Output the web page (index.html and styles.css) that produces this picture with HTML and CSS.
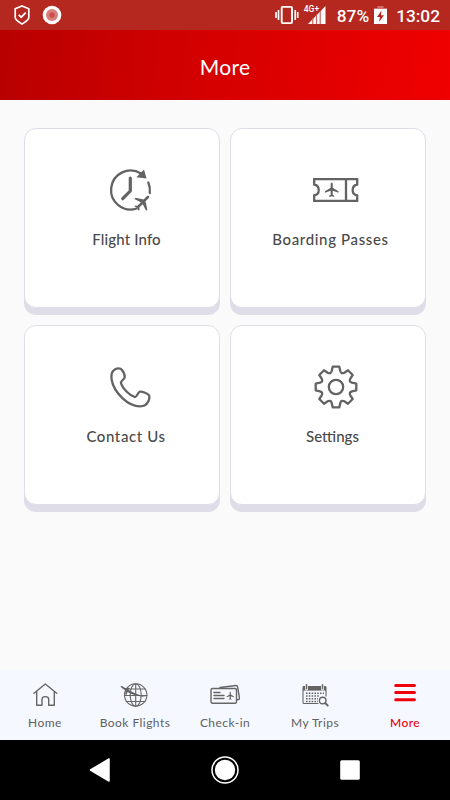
FILE: index.html
```
<!DOCTYPE html>
<html lang="en">
<head>
    <meta charset="UTF-8">
    <meta name="viewport" content="width=device-width, initial-scale=1.0">
    <title>More</title>
    <link rel="stylesheet" href="styles.css">
</head>
<body>
    <svg class="defs" width="0" height="0">
        <symbol id="plane" viewBox="0 0 24 24">
            <path d="M21.5 16v-2l-8-5V3.5c0-.83-.67-1.5-1.5-1.5s-1.5.67-1.5 1.5V9l-8 5v2l8-2.5V19l-2 1.5V22l3.5-1 3.5 1v-1.5L13.5 19v-5.5l8 2.5z"/>
        </symbol>
    </svg>

    <div class="status-bar">
        <div class="status-left">
            <svg width="18" height="22" viewBox="0 0 18 22" fill="none" stroke="#fff" stroke-width="1.7">
                <path d="M9 2l6.8 2.8v8.7c0 2.5-3.5 4.4-6.8 6.5-3.3-2.1-6.8-4-6.8-6.5V4.8z"/>
                <path d="M5.7 10.8l2.5 2.4 4.5-4.5"/>
            </svg>
            <svg width="20" height="20" viewBox="0 0 20 20">
                <circle cx="10" cy="10" r="9.3" fill="#fff"/>
                <circle cx="10" cy="10" r="6" fill="#d97f7b"/>
                <circle cx="10" cy="10" r="2.7" fill="#c9504b"/>
            </svg>
        </div>
        <div class="status-right">
            <svg class="vibrate" width="24" height="20" viewBox="0 0 24 20" fill="none" stroke="#fff">
                <rect x="6.7" y="1.9" width="10.3" height="16.2" rx="1" stroke-width="1.9"/>
                <path d="M3.5 5v10M1 7v6M20.2 5v10M22.7 7v6" stroke-width="1.7"/>
            </svg>
            <div class="signal">
                <span class="network">4G+</span>
                <svg width="18" height="18" viewBox="0 0 18 18">
                    <path d="M0 18L17.5 0v18z" fill="#fff"/>
                    <path d="M4.8 12v6M8.5 8v10M12.2 5v13" stroke="#c8605b" stroke-width="1.2"/>
                </svg>
            </div>
            <span class="percent">87%</span>
            <svg class="battery" width="13" height="18" viewBox="0 0 13 18">
                <path d="M3.5 0h6v2H13v1.5H0V2h3.5z" fill="#d1716c"/>
                <path d="M0 3h13v15H0z" fill="#fff"/>
                <path d="M7.5 4.5L3 11h3l-1 5 5-6.8H7z" fill="#b42820"/>
            </svg>
            <span class="time">13:02</span>
        </div>
    </div>

    <header class="header">
        <h1>More</h1>
    </header>

    <main class="menu">
        <a class="card">
            <svg class="card-icon" viewBox="0 0 48 48">
                <path d="M30.7 42.5A19.5 19.5 0 1 1 35 7.5M42.3 16.5A19.5 19.5 0 0 1 43.8 27"/>
                <path d="M24.3 12v13l-7.600 7.700" stroke-width="3.2"/>
                <path class="solid" d="M38 3.5l2.5 9-10.2-1.2z"/>
                <use class="solid" href="#plane" x="-10.5" y="-10.5" width="21" height="21" transform="translate(36.7 36.3) rotate(45)"/>
            </svg>
            <span class="card-label flight">Flight Info</span>
        </a>
        <a class="card">
            <svg class="card-icon" viewBox="0 0 48 48">
                <path class="square" d="M2.2 13.2h43v5.3a5.6 5.6 0 0 0 0 11v5.3h-43v-5.3a5.6 5.6 0 0 0 0-11z"/>
                <path class="square" d="M34 13.2v21.6"/>
                <use class="solid" href="#plane" x="11.2" y="15.3" width="17" height="17"/>
            </svg>
            <span class="card-label boarding">Boarding Passes</span>
        </a>
        <a class="card">
            <svg class="card-icon" viewBox="0 0 48 48">
                <path d="M7.3 7.7C10 4.9 14.3 4.8 16 7c1.5 1.9 3 5.2 2.7 7.3-.3 2.3-4.5 3.700-3.700 6 2 5.700 8 11.700 13.700 13.700 2 .7 3-4.500 5-5.300 2-.7 7.600 1.800 8.800 3 1.300 1.400.8 4.800-.5 7.300-1.300 2.600-4.500 4.300-8 4.300-6 0-12-3-17.300-8C11 30 6.700 23 5.700 17c-.6-3.700-.4-7.200 1.600-9.300z"/>
            </svg>
            <span class="card-label contact">Contact Us</span>
        </a>
        <a class="card">
            <svg class="card-icon" viewBox="-24 -24 48 48">
                <path d="M-3.3-20.3H3.3L4.3-16Q5.3-12.7 8.3-14.3L12-16.7 16.7-12 14.3-8.3Q12.7-5.3 16-4.3L20.3-3.3V3.3L16 4.3Q12.7 5.3 14.3 8.3L16.7 12 12 16.7 8.3 14.3Q5.3 12.7 4.3 16L3.3 20.3H-3.3L-4.3 16Q-5.3 12.7-8.3 14.3L-12 16.7-16.7 12-14.3 8.3Q-12.7 5.3-16 4.3L-20.3 3.3V-3.3L-16-4.3Q-12.7-5.3-14.3-8.3L-16.7-12-12-16.7-8.3-14.3Q-5.3-12.7-4.3-16z"/>
                <circle r="7.2"/>
            </svg>
            <span class="card-label settings">Settings</span>
        </a>
    </main>

    <nav class="tabs">
        <a class="tab">
            <svg class="tab-icon" viewBox="0 0 30 30">
                <path d="M4 13.2L15.3 4l11.4 9.2M6.7 11.5v13.8H12v-6a3.3 2.6 0 0 1 6.7 0v6h5.6V11.5"/>
            </svg>
            <span>Home</span>
        </a>
        <a class="tab">
            <svg class="tab-icon thin" viewBox="0 0 30 30">
                <circle cx="15.7" cy="15" r="11.2"/>
                <ellipse cx="15.7" cy="15" rx="5.5" ry="11.2"/>
                <path d="M15.7 4v22M4.5 15.500h22.500M6.500 9h18.500M6.500 21.500h18.500"/>
                <path class="solid" d="M.3 6l2.200.3L5 8l4-.3 1 .8-2 1c5 3 11 5.700 18.500 7.500C19 16.700 12.500 14.800 7.500 12l-1 3-1.200-.5.200-4L1.800 8z"/>
            </svg>
            <span>Book Flights</span>
        </a>
        <a class="tab">
            <svg class="tab-icon" viewBox="0 0 30 30">
                <path d="M10 7.5l16-2q1.3-.1 1.5 1l2 11.5q.2 1.3-1.2 1.5l-1.3.2"/>
                <rect x="1" y="8.5" width="25.5" height="14.8" rx="1.5"/>
                <path d="M4 12.5h6M4 15.5h10M4 18.5h10"/>
                <use class="solid" href="#plane" x="15.5" y="11" width="9.5" height="9.5"/>
            </svg>
            <span>Check-in</span>
        </a>
        <a class="tab">
            <svg class="tab-icon thin" viewBox="0 0 30 30">
                <path d="M26 16V7.500q0-1-1-1H4q-1 0-1 1V22.500q0 1 1 1h14"/>
                <path class="solid" d="M3 6.3h23v4.3H3z"/>
                <path d="M6.5 5v4M22.5 5v4" stroke="#f5f8ff" stroke-width="3"/>
                <path d="M6.5 4.7v4M22.5 4.7v4" stroke-width="1.5"/>
                <path d="M6 13.2h18M6 16h14M6 18.8h12M6 21.5h12" stroke-width="1.5" stroke-dasharray="1.6 1.2" stroke-linecap="butt"/>
                <circle cx="22.7" cy="20.5" r="3.3" fill="#f5f8ff" stroke-width="1.4"/>
                <path d="M25.2 23l2.5 2.5" stroke-width="1.9"/>
            </svg>
            <span>My Trips</span>
        </a>
        <a class="tab active">
            <svg class="tab-icon" viewBox="0 0 30 30">
                <path d="M5.7 5.5h18.7M5.7 12.5h18.7M5.7 19.7h18.7" stroke-width="3"/>
            </svg>
            <span>More</span>
        </a>
    </nav>

    <div class="system-nav">
        <svg width="22" height="26" viewBox="0 0 22 26"><path d="M2.5 13L21 2v22z" fill="#fff" stroke="#fff" stroke-width="1.5" stroke-linejoin="round"/></svg>
        <svg width="28" height="28" viewBox="0 0 28 28"><circle cx="14" cy="14" r="13" fill="none" stroke="#fff" stroke-width="1.5"/><circle cx="14" cy="14" r="10.2" fill="#fff"/></svg>
        <svg width="20" height="20" viewBox="0 0 20 20"><rect x=".2" y=".2" width="19.6" height="19.6" rx="1.5" fill="#fff"/></svg>
    </div>
</body>
</html>
```
FILE: styles.css
```
* {
    box-sizing: border-box;
}

body {
    display: flex;
    flex-direction: column;
    height: 800px;
    margin: 0;
    background: #fafafa;
    font-family: Lato, sans-serif;
}

svg {
    display: block;
    flex-shrink: 0;
}

.defs {
    position: absolute;
}

.status-bar {
    display: flex;
    justify-content: space-between;
    align-items: center;
    height: 30px;
    padding: 0 10px 0 13px;
    background: #b42820;
    color: #fff;
    font-family: Roboto, sans-serif;
    font-size: 17.3px;
    font-weight: 500;
}

.status-left,
.status-right {
    display: flex;
    align-items: center;
}

.status-left {
    gap: 11px;
}

.signal {
    position: relative;
    margin-left: 9px;
}

.network {
    position: absolute;
    left: -4px;
    top: -2px;
    font-size: 8.5px;
    line-height: 10px;
}

.percent {
    margin: 2px 5px 0 11px;
}

.time {
    margin: 2px 0 0 9px;
}

.header {
    display: flex;
    align-items: center;
    justify-content: center;
    height: 70px;
    padding-top: 4px;
    background: linear-gradient(95deg, #b80000, #d40000 45%, #f00000);
    color: #fff;
}

.header h1 {
    margin: 0;
    font-size: 21px;
    font-weight: 400;
    letter-spacing: 0.3px;
    line-height: 26px;
}

.menu {
    flex: 1;
    display: grid;
    grid-template-columns: 196px 196px;
    grid-auto-rows: 180px;
    align-content: start;
    gap: 17px 10px;
    padding: 28px 24px 0;
}

.card {
    display: flex;
    flex-direction: column;
    align-items: center;
    padding-top: 37px;
    border: 1px solid #dfdee8;
    border-radius: 12px;
    background: #fff;
    box-shadow: 0 7px 0 #dfdee8;
}

.card-icon {
    width: 48px;
    height: 48px;
    margin-left: 15px;
    fill: none;
    stroke: #636363;
    stroke-width: 2.3;
    stroke-linecap: round;
    stroke-linejoin: round;
}

.solid {
    fill: #636363;
    stroke: none;
}

.square {
    stroke-linejoin: miter;
}

.card-label {
    margin: 15px 0 0 9px;
    color: #4a4a4a;
    font-size: 15px;
    font-weight: 500;
    line-height: 20px;
    white-space: nowrap;
}

.flight {
    letter-spacing: 0.15px;
}

.boarding {
    margin-left: 5px;
    letter-spacing: 0.65px;
}

.contact {
    margin-left: 8px;
    letter-spacing: 0.6px;
}

.tabs {
    display: grid;
    grid-template-columns: repeat(5, 1fr);
    height: 70px;
    padding-top: 10px;
    background: #f5f8ff;
}

.tab {
    display: flex;
    flex-direction: column;
    align-items: center;
    color: #606060;
    font-size: 12px;
    letter-spacing: 0.45px;
    line-height: 16px;
    white-space: nowrap;
}

.tab span {
    margin-top: 5px;
}

.tab-icon {
    width: 30px;
    height: 30px;
    fill: none;
    stroke: #666;
    stroke-width: 1.4;
    stroke-linecap: round;
    stroke-linejoin: round;
}

.thin {
    stroke-width: 1.1;
}

.active {
    color: #e8000b;
    font-weight: 500;
}

.active .tab-icon {
    stroke: #f00008;
}

.system-nav {
    display: flex;
    align-items: center;
    justify-content: space-between;
    height: 60px;
    padding: 0 90px 0 88px;
    background: #000;
}
```
